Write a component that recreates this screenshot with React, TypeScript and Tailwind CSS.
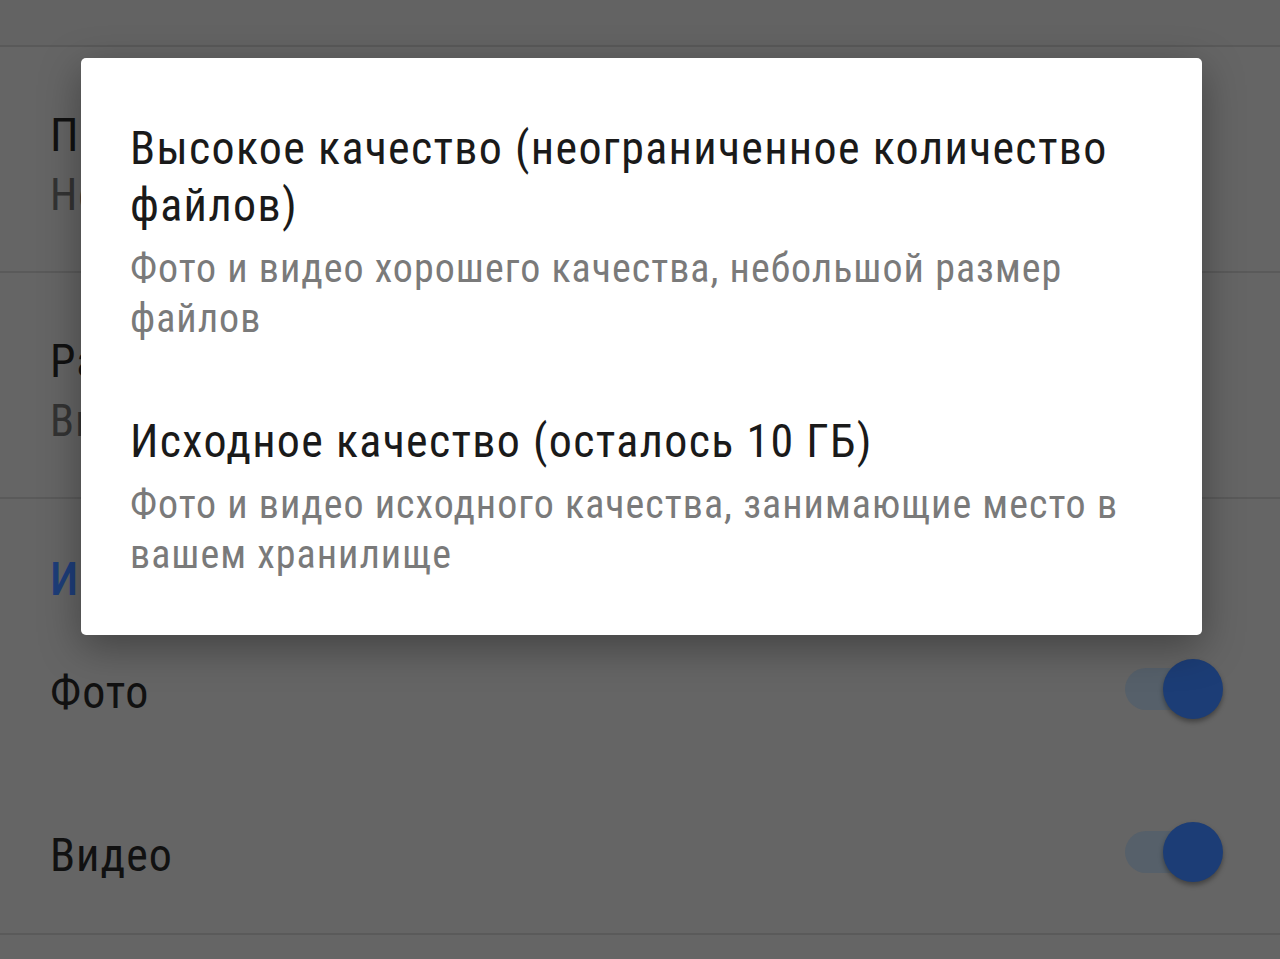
import React from 'react';

const font = { fontFamily: '"Roboto Condensed", Roboto, "Noto Sans", sans-serif' };

function Toggle() {
  return (
    <div className="relative h-[60px] w-[98px]">
      <div className="absolute left-0 top-[9px] h-[42px] w-[94px] rounded-full bg-[#56606a]" />
      <div className="absolute right-0 top-0 h-[60px] w-[60px] rounded-full bg-[#1c3d76] shadow-[0_3px_5px_rgba(0,0,0,0.35)]" />
    </div>
  );
}

function Row({ title, sub }: { title: string; sub: string }) {
  return (
    <div className="border-b-2 border-[#5a5a5a] pl-[50px] pt-[58px] pb-[46px]">
      <div className="text-[46px] leading-[60px] tracking-[1px] text-[#111]">{title}</div>
      <div className="text-[44px] leading-[60px] tracking-[1px] text-[#333]">{sub}</div>
    </div>
  );
}

function Option({ title, sub }: { title: string; sub: string }) {
  return (
    <div className="flex flex-col gap-[10px]">
      <div className="text-[46px] leading-[57px] tracking-[1.3px] text-[#1a1a1a]">{title}</div>
      <div className="text-[40px] leading-[50px] tracking-[1px] text-[#7a7a7a]">{sub}</div>
    </div>
  );
}

export default function App() {
  return (
    <div className="relative h-[959px] w-[1280px] overflow-hidden bg-[#656565]" style={font}>
      <div className="h-[47px] border-b-2 border-[#595959] bg-[#636363]" />
      <Row title="Папки на устройстве" sub="Не выбраны" />
      <Row title="Размер фото и видео" sub="Высокое качество" />
      <div className="border-b-2 border-[#5a5a5a]">
        <div className="h-[108px] pl-[50px] pt-[52px]">
          <div className="text-[46px] leading-[56px] font-medium tracking-[1px] text-[#1e3e7a]">
            Использование мобильного интернета
          </div>
        </div>
        <div className="flex h-[163px] items-center justify-between pl-[50px] pr-[57px]">
          <span className="pt-[8px] text-[46px] tracking-[1px] text-[#111]">Фото</span>
          <Toggle />
        </div>
        <div className="flex h-[163px] items-center justify-between pl-[50px] pr-[57px]">
          <span className="pt-[8px] text-[46px] tracking-[1px] text-[#111]">Видео</span>
          <Toggle />
        </div>
      </div>

      <div className="absolute left-[81px] top-[58px] w-[1121px] rounded-[5px] bg-white pl-[49px] pr-[40px] pt-[62px] pb-[55px] shadow-[0_12px_40px_rgba(0,0,0,0.35)]">
        <div className="flex flex-col gap-[69px]">
          <Option
            title="Высокое качество (неограниченное количество файлов)"
            sub="Фото и видео хорошего качества, небольшой размер файлов"
          />
          <Option
            title="Исходное качество (осталось 10 ГБ)"
            sub="Фото и видео исходного качества, занимающие место в вашем хранилище"
          />
        </div>
      </div>
    </div>
  );
}
